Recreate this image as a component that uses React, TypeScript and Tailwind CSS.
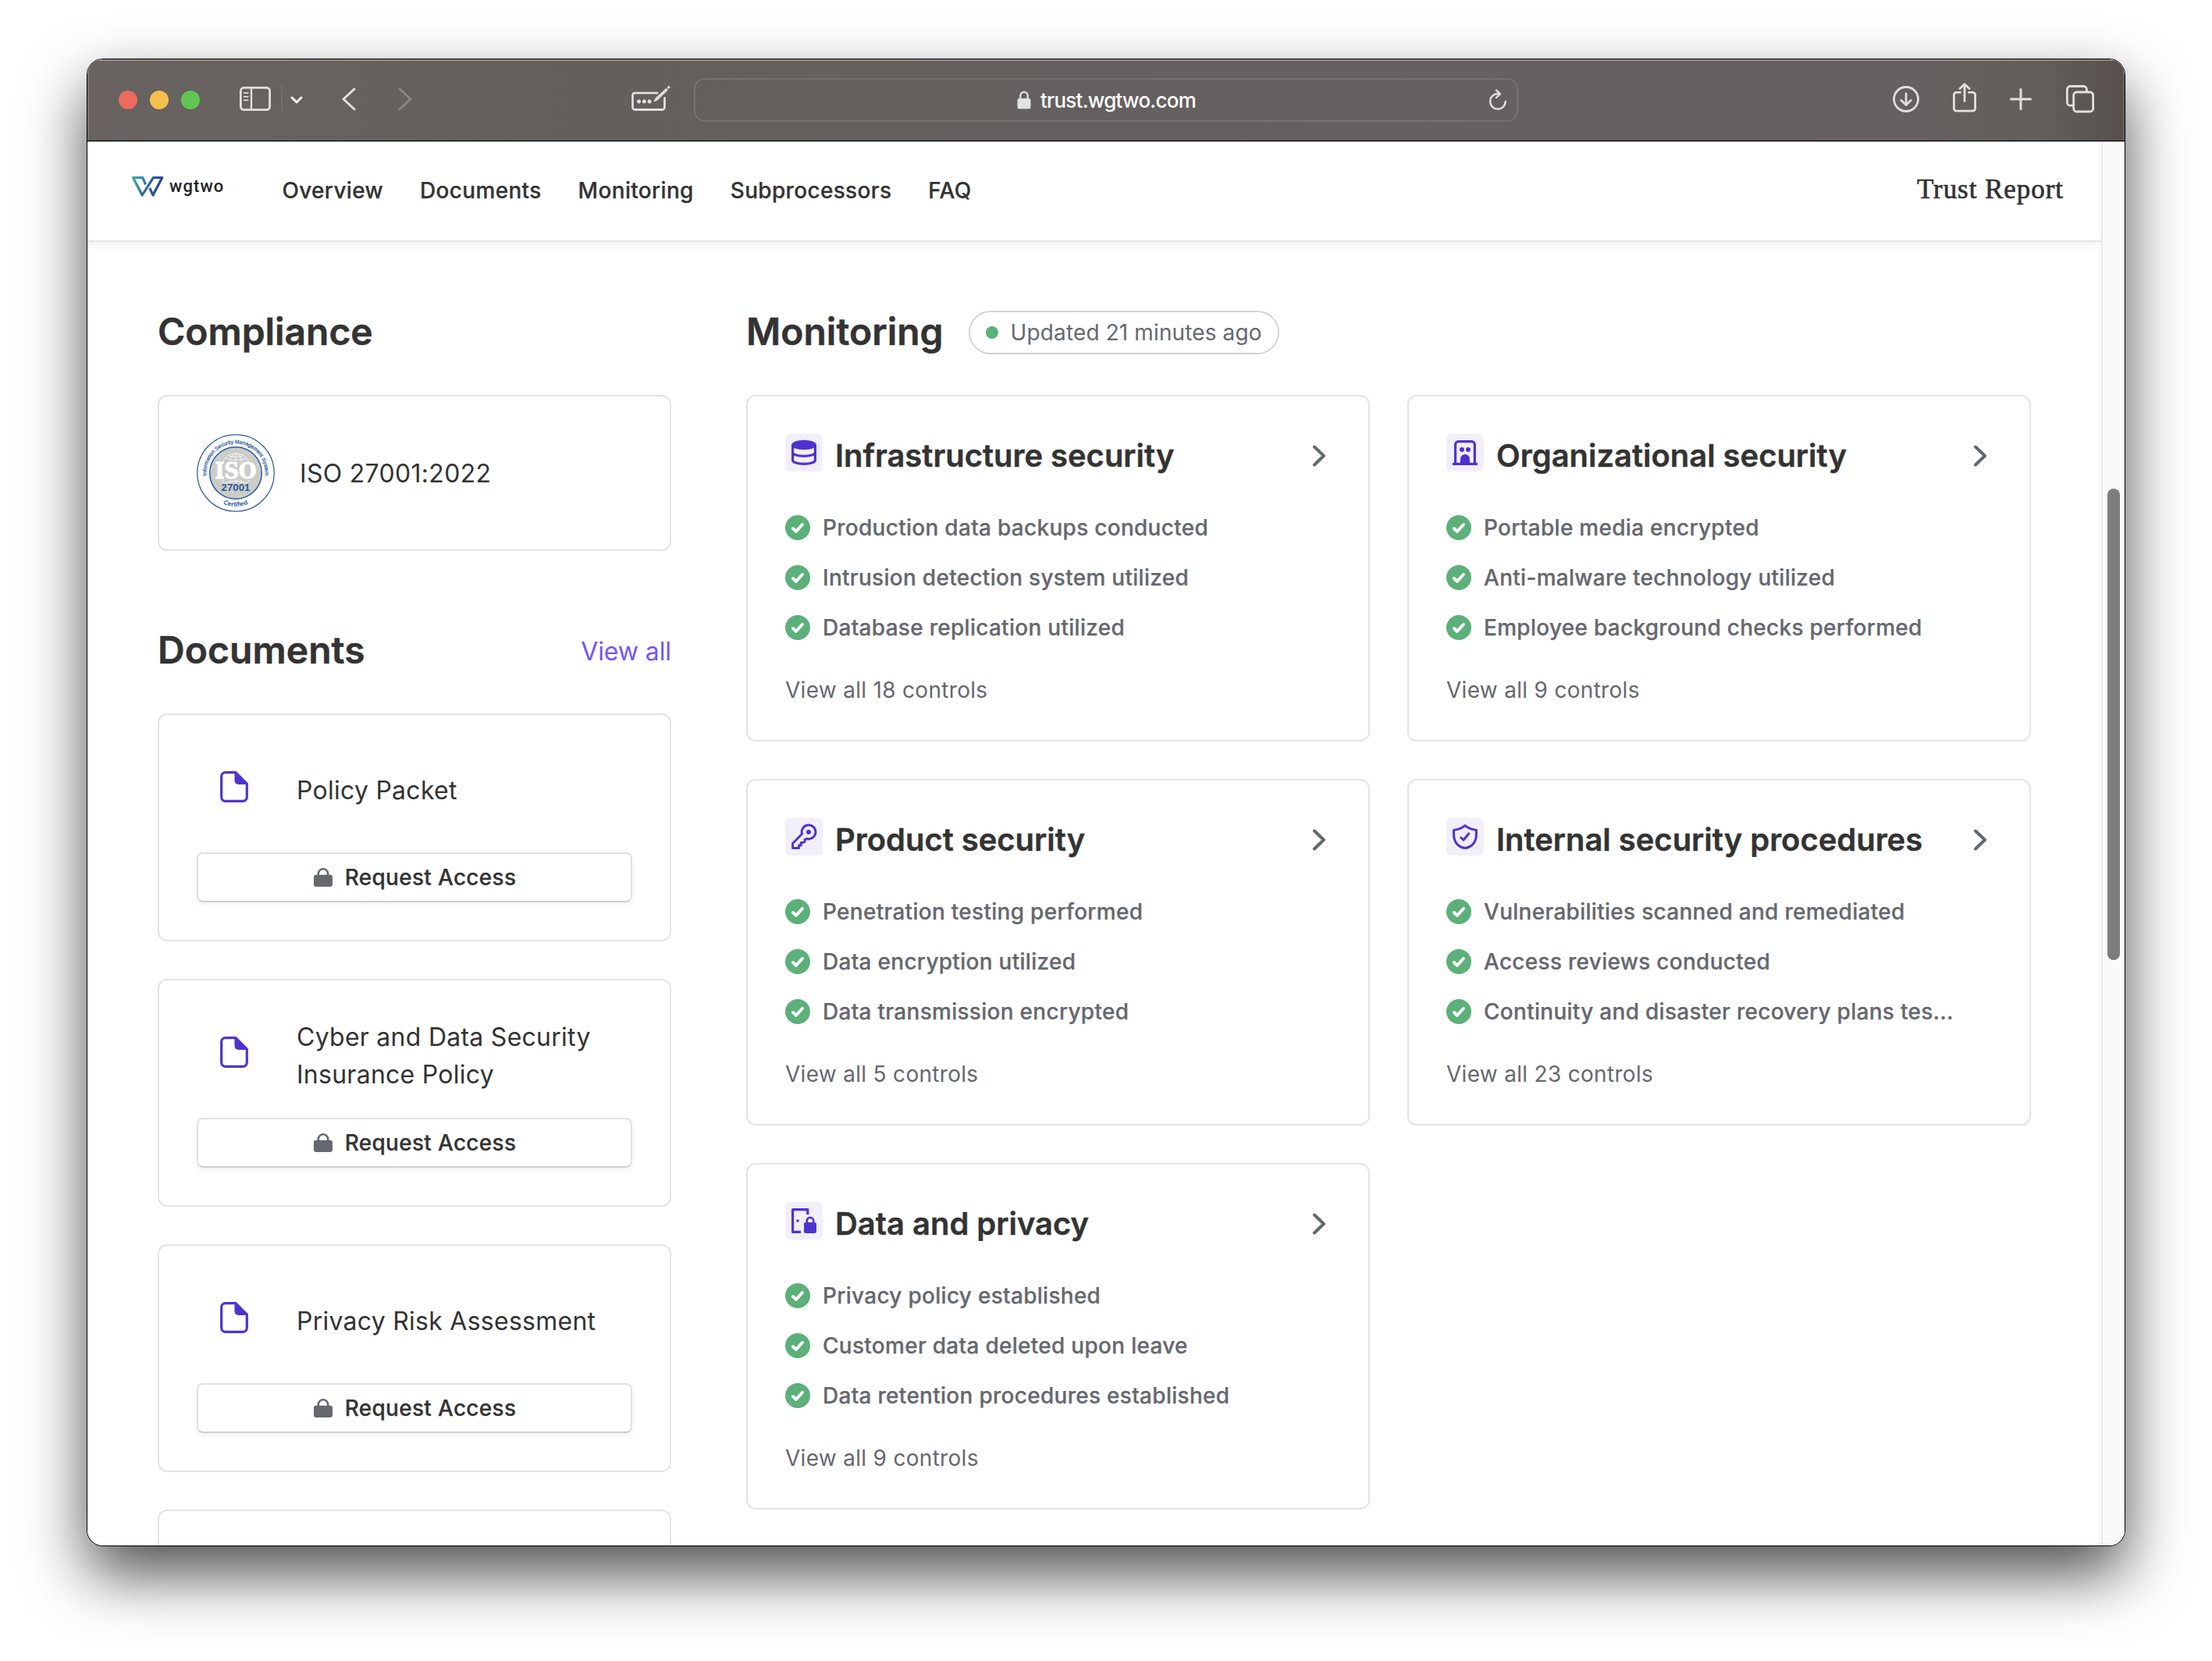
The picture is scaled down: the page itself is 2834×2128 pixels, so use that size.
import type { ReactNode } from 'react';

const INK = '#4f33cf';

/* ---------- Browser toolbar icons ---------- */

function SidebarIcon() {
  return (
    <svg width="40" height="32" viewBox="0 0 40 32" fill="none" stroke="#e3dfde" strokeLinecap="round">
      <rect x="1.4" y="1.4" width="37.2" height="28.2" rx="4" strokeWidth="2.8" />
      <path d="M15 1.5V29.5" strokeWidth="2.4" />
      <path d="M5.8 8.2H10.6M5.8 12.8H10.6M5.8 17.4H10.6" strokeWidth="1.8" />
    </svg>
  );
}

function AutofillIcon() {
  return (
    <svg width="50" height="34" viewBox="0 0 50 34" fill="none" stroke="#e3dfde" strokeLinecap="round" strokeLinejoin="round">
      <path d="M33 10.2H4.5a3 3 0 0 0-3 3V28.5a3 3 0 0 0 3 3H39.5a3 3 0 0 0 3-3V16.5" strokeWidth="2.8" />
      <circle cx="9.5" cy="21" r="2.5" fill="#e3dfde" stroke="none" />
      <circle cx="16.3" cy="21" r="2.5" fill="#e3dfde" stroke="none" />
      <circle cx="23.1" cy="21" r="2.5" fill="#e3dfde" stroke="none" />
      <path d="M29.2 20.8L31.4 16.8L44.5 4.7L46 6.2L33 19Z" fill="#e3dfde" strokeWidth="1.2" />
      <path d="M47.3 3.2L48 2.5" strokeWidth="3" />
    </svg>
  );
}

function DownloadIcon() {
  return (
    <svg width="34" height="34" viewBox="0 0 34 34" fill="none" stroke="#e3dfde" strokeWidth="2.8" strokeLinecap="round" strokeLinejoin="round">
      <circle cx="17" cy="17" r="15.5" />
      <path d="M17 9.8V24M10.8 18.4L17 24.4L23.2 18.4" />
    </svg>
  );
}

function ShareIcon() {
  return (
    <svg width="30" height="38" viewBox="0 0 30 38" fill="none" stroke="#e3dfde" strokeWidth="2.8" strokeLinecap="round" strokeLinejoin="round">
      <path d="M9.5 12.4H4.6a3.2 3.2 0 0 0-3.2 3.2V33a3.2 3.2 0 0 0 3.2 3.2H25.4A3.2 3.2 0 0 0 28.6 33V15.6a3.2 3.2 0 0 0-3.2-3.2H20.5" />
      <path d="M15 23.5V2M9 7.6L15 1.8L21 7.6" />
    </svg>
  );
}

function PlusIcon() {
  return (
    <svg width="28" height="28" viewBox="0 0 28 28" fill="none" stroke="#e3dfde" strokeWidth="3" strokeLinecap="round">
      <path d="M14 1.5V26.5M1.5 14H26.5" />
    </svg>
  );
}

function TabsIcon() {
  return (
    <svg width="36" height="36" viewBox="0 0 36 36" fill="none" stroke="#e3dfde" strokeWidth="2.8" strokeLinejoin="round">
      <rect x="9.7" y="9" width="25" height="25" rx="4" />
      <path d="M9.7 26.2H5.4a4 4 0 0 1-4-4V5.5a4 4 0 0 1 4-4H22.5a4 4 0 0 1 4 4V9" />
    </svg>
  );
}

function Toolbar() {
  return (
    <div className="flex h-[106px] shrink-0 flex-col">
      <div className="flex h-[104px] items-center bg-[linear-gradient(90deg,#686261_0%,#655f5c_25%,#655f5f_50%,#666060_90%,#635e59_96%,#57504d_100%)] pb-0.5 shadow-[inset_0_2px_0_rgba(175,178,160,0.55),inset_2px_0_0_rgba(255,255,255,0.1),inset_-2px_0_0_rgba(255,255,255,0.1)]">
        <div className="ml-10 flex gap-4 pt-0.5">
          <span className="size-6 rounded-full bg-[#ed6a5e]" />
          <span className="size-6 rounded-full bg-[#f5bf4f]" />
          <span className="size-6 rounded-full bg-[#61c554]" />
        </div>
        <div className="ml-[51px] flex items-center">
          <SidebarIcon />
          <span className="ml-[13px] h-9 w-0.5 bg-[#736d6b]" />
          <svg className="ml-[10px] mt-0.5" width="16" height="10" viewBox="0 0 16 10" fill="none" stroke="#f3f0ef" strokeWidth="3" strokeLinecap="round" strokeLinejoin="round">
            <path d="M2 2L8 8L14 2" />
          </svg>
        </div>
        <div className="ml-[50px] flex items-center gap-[54px]">
          <svg width="18" height="30" viewBox="0 0 18 30" fill="none" stroke="#e3dfde" strokeWidth="3" strokeLinecap="round" strokeLinejoin="round">
            <path d="M16 2L2 15L16 28" />
          </svg>
          <svg width="18" height="30" viewBox="0 0 18 30" fill="none" stroke="#8b8583" strokeWidth="3" strokeLinecap="round" strokeLinejoin="round">
            <path d="M2 2L16 15L2 28" />
          </svg>
        </div>
        <div className="ml-[281px] -mt-0.5">
          <AutofillIcon />
        </div>
        <div className="ml-[30px] mt-0.5 flex h-14 w-[1056px] items-center rounded-[14px] border-2 border-[#777170] pr-3">
          <svg className="ml-[412px]" width="18" height="24" viewBox="0 0 18 24" fill="none">
            <rect x="0.5" y="10" width="17" height="13.5" rx="2.5" fill="#e6e2e1" />
            <path d="M4.3 11V6.5a4.7 4.7 0 0 1 9.4 0V11" stroke="#e6e2e1" strokeWidth="2.2" />
          </svg>
          <span className="ml-3 flex-1 pt-0.5 text-[26px] leading-8 font-medium tracking-[-0.75px] text-white">trust.wgtwo.com</span>
          <svg width="24" height="28" viewBox="0 0 24 28" fill="none" stroke="#e3dfde" strokeWidth="2.4" strokeLinecap="round" strokeLinejoin="round">
            <path d="M13.5 6.2A9.8 9.8 0 1 0 21.8 16" />
            <path d="M10 1.5L15 6.3L10 11.2" />
          </svg>
        </div>
        <div className="ml-auto mr-[39px] flex items-center">
          <DownloadIcon />
          <span className="ml-[43px] -mt-1"><ShareIcon /></span>
          <span className="ml-[43px]"><PlusIcon /></span>
          <span className="ml-11"><TabsIcon /></span>
        </div>
      </div>
      <div className="h-px bg-black" />
      <div className="h-px bg-[#b4b4b4]" />
    </div>
  );
}

/* ---------- Site header ---------- */

function Logo() {
  return (
    <div className="flex items-center">
      <svg width="42" height="28" viewBox="0 0 42 28" fill="none" strokeWidth="3.2" strokeLinejoin="round">
        <defs>
          <linearGradient id="mark" gradientUnits="userSpaceOnUse" x1="2" y1="4" x2="40" y2="20">
            <stop offset="0" stopColor="#45a5a6" />
            <stop offset="0.55" stopColor="#2f62a3" />
            <stop offset="1" stopColor="#2a3792" />
          </linearGradient>
        </defs>
        <path d="M18.6 11.5L14.8 2.6H2.4L14.2 25L28.4 2.6H39.8L28 25L23.8 16" stroke="url(#mark)" />
      </svg>
      <span className="ml-[7px] font-[Roboto,sans-serif] text-[22px] leading-7 font-medium tracking-[1.1px] text-[#222]">wgtwo</span>
    </div>
  );
}

function SiteHeader() {
  return (
    <header className="relative z-10 flex h-32 shrink-0 items-center border-b-2 border-[#e4e4e4] bg-white pr-12 pl-14 shadow-[0_4px_16px_rgba(0,0,0,0.06)]">
      <div className="-mt-3">
        <Logo />
      </div>
      <nav className="ml-[74px] flex gap-[47px] pb-0.5 text-[28px] leading-10 font-medium tracking-[0.32px] text-[#333] [-webkit-text-stroke:0.25px_#333]">
        <a>Overview</a>
        <a>Documents</a>
        <a>Monitoring</a>
        <a>Subprocessors</a>
        <a>FAQ</a>
      </nav>
      <span className="ml-auto pb-1 font-['Liberation_Serif',serif] text-[35px] leading-10 tracking-[0.95px] text-[#333] [-webkit-text-stroke:0.7px_#333]">Trust Report</span>
    </header>
  );
}

/* ---------- Compliance and documents ---------- */

function IsoBadge() {
  return (
    <svg width="100" height="100" viewBox="0 0 100 100" fill="none">
      <defs>
        <path id="arcTop" d="M13.3 58A37.6 37.6 0 1 1 86.7 58" />
        <path id="arcBottom" d="M7.2 50A42.8 42.8 0 0 0 92.8 50" />
      </defs>
      <circle cx="50" cy="50" r="49.2" fill="#fff" stroke="#2a5a9c" strokeWidth="1.2" />
      <circle cx="50" cy="50" r="33.3" fill="#cccdc8" stroke="#2a5a9c" strokeWidth="1.5" />
      <g stroke="#f4f4f2" strokeWidth="1">
        <path d="M33 36C37 28 43 25 50 25S63 28 67 36" />
        <path d="M42 36C43 30 46 25 50 25S57 30 58 36M50 25V36M36 31Q50 36 64 31M40 27.5Q50 31 60 27.5" />
        <path d="M33 59C35 64 39 67 42 68M67 59C65 64 61 67 58 68M42 59L44 64M58 59L56 64M50 59V64M36 63Q50 58 64 63" />
      </g>
      <text x="50" y="57" textAnchor="middle" textLength="53" lengthAdjust="spacingAndGlyphs" fontFamily="DejaVu Serif, serif" fontWeight="700" fontSize="27" fill="#fff" stroke="#fff" strokeWidth="1">ISO</text>
      <text x="50" y="73" textAnchor="middle" textLength="37" lengthAdjust="spacingAndGlyphs" fontFamily="Liberation Sans, sans-serif" fontWeight="700" fontSize="13.5" fill="#2a5a9c">27001</text>
      <text fontFamily="Liberation Sans, sans-serif" fontSize="6.7" fill="#2a5a9c" stroke="#2a5a9c" strokeWidth="0.25">
        <textPath href="#arcTop" startOffset="50%" textAnchor="middle">Information Security Management System</textPath>
      </text>
      <text fontFamily="Liberation Sans, sans-serif" fontSize="8" fontWeight="700" fill="#2a5a9c">
        <textPath href="#arcBottom" startOffset="50%" textAnchor="middle">Certified</textPath>
      </text>
    </svg>
  );
}

function DocumentIcon() {
  return (
    <svg width="36" height="40" viewBox="0 0 36 40" fill="none">
      <path d="M19.5 1.7H6.7a5 5 0 0 0-5 5V33.3a5 5 0 0 0 5 5H29.3a5 5 0 0 0 5-5V16" stroke={INK} strokeWidth="3.2" />
      <path d="M18.5 0H20.5L36 15.5V17H23.5a5 5 0 0 1-5-5Z" fill={INK} />
    </svg>
  );
}

function DocumentCard({ title }: { title: string }) {
  return (
    <div className="flex h-[292px] shrink-0 flex-col rounded-xl border-2 border-[#e4e4e4] bg-white p-12">
      <div className="flex h-24 items-center">
        <div className="mb-2 ml-[30px]">
          <DocumentIcon />
        </div>
        <div className="ml-[62px] w-[400px] pt-0.5 text-[32px] leading-[48px] tracking-[0.26px] text-[#333]">{title}</div>
      </div>
      <button className="mt-8 flex h-16 items-center justify-center gap-4 rounded-lg border-2 border-[#e1e1e1] border-b-[#cfcfcf] bg-white pl-px text-[28px] leading-10 font-medium tracking-[0.3px] text-[#333] shadow-[0_3px_6px_rgba(0,0,0,0.06)] [-webkit-text-stroke:0.25px_#333]">
        <svg width="24" height="24" viewBox="0 0 24 24" fill="none">
          <rect x="0" y="8.8" width="24" height="15.2" rx="3" fill="#65686e" />
          <path d="M5.8 10V7.5a6.2 6.2 0 0 1 12.4 0V10" stroke="#65686e" strokeWidth="2.6" />
        </svg>
        <span>Request Access</span>
      </button>
    </div>
  );
}

/* ---------- Monitoring ---------- */

const icons: Record<string, ReactNode> = {
  database: (
    <>
      <ellipse cx="24" cy="14" rx="16" ry="6.2" fill={INK} />
      <path d="M9.6 14V33.5C9.6 36.5 16 38.4 24 38.4S38.4 36.5 38.4 33.5V14M9.6 23.5C9.6 26.5 16 28.4 24 28.4S38.4 26.5 38.4 23.5" stroke={INK} strokeWidth="3.2" />
    </>
  ),
  building: (
    <>
      <path d="M11.6 38V13.6a4 4 0 0 1 4-4H32.4a4 4 0 0 1 4 4V38" stroke={INK} strokeWidth="3.2" />
      <path d="M8 38.4H40" stroke={INK} strokeWidth="3.2" />
      <circle cx="20" cy="20" r="3" fill={INK} />
      <circle cx="28" cy="20" r="3" fill={INK} />
      <path d="M18 39V32a6 6 0 0 1 12 0V39Z" fill={INK} />
    </>
  ),
  key: (
    <>
      <path d="M21.5 20.5A8.9 8.9 0 1 1 27.5 26.5L25 27.8V30.5L23 31.5H20.3V35H17.5V38.4H9.6V32.5Z" stroke={INK} strokeWidth="3" strokeLinejoin="round" />
      <circle cx="30" cy="18" r="3" fill={INK} />
    </>
  ),
  shield: (
    <g stroke={INK} strokeWidth="3" strokeLinejoin="round">
      <path d="M24 9.7C27.5 12.8 32 14.6 38.4 15.5V21C38.4 30 33.5 37.5 24 38.5C14.5 37.5 9.6 30 9.6 21V15.5C16 14.6 20.5 12.8 24 9.7Z" />
      <path d="M18.8 25L22 28.2L28.8 20" strokeLinecap="round" />
    </g>
  ),
  privacy: (
    <>
      <path d="M28.8 16V9.6H9.6V38.4H20" stroke={INK} strokeWidth="3.2" strokeLinejoin="round" />
      <circle cx="16" cy="24" r="1.8" fill={INK} />
      <rect x="24" y="26" width="16" height="14" rx="2.5" fill={INK} />
      <path d="M27.7 27V24.2a4.3 4.3 0 0 1 8.6 0V27" stroke={INK} strokeWidth="2.6" />
    </>
  ),
};

function CheckBadge() {
  return (
    <svg width="32" height="32" viewBox="0 0 32 32" fill="none" className="shrink-0">
      <circle cx="16" cy="16" r="16" fill="#5cb07a" />
      <path d="M10 17L13.8 20.8L22 12" stroke="#fff" strokeWidth="4" strokeLinecap="round" strokeLinejoin="round" />
    </svg>
  );
}

type Section = { icon: string; title: string; items: string[]; total: number };

const sections: Section[] = [
  { icon: 'database', title: 'Infrastructure security', items: ['Production data backups conducted', 'Intrusion detection system utilized', 'Database replication utilized'], total: 18 },
  { icon: 'building', title: 'Organizational security', items: ['Portable media encrypted', 'Anti-malware technology utilized', 'Employee background checks performed'], total: 9 },
  { icon: 'key', title: 'Product security', items: ['Penetration testing performed', 'Data encryption utilized', 'Data transmission encrypted'], total: 5 },
  { icon: 'shield', title: 'Internal security procedures', items: ['Vulnerabilities scanned and remediated', 'Access reviews conducted', 'Continuity and disaster recovery plans tes...'], total: 23 },
  { icon: 'privacy', title: 'Data and privacy', items: ['Privacy policy established', 'Customer data deleted upon leave', 'Data retention procedures established'], total: 9 },
];

function MonitoringCard({ icon, title, items, total }: Section) {
  return (
    <div className="flex h-[444px] flex-col rounded-xl border-2 border-[#e4e4e4] bg-white px-12 pt-12">
      <div className="flex h-14 items-start">
        <span className="flex size-12 shrink-0 rounded-md bg-[#f1effa]">
          <svg width="48" height="48" viewBox="0 0 48 48" fill="none">{icons[icon]}</svg>
        </span>
        <h3 className="ml-4 pt-0.5 text-[40px] leading-[52px] font-semibold tracking-[-0.04px] whitespace-nowrap text-[#333] [-webkit-text-stroke:0.4px_#333]">{title}</h3>
        <svg className="mt-[14px] mr-[6px] ml-auto" width="18" height="28" viewBox="0 0 18 28" fill="none" stroke="#65686e" strokeWidth="4" strokeLinecap="round" strokeLinejoin="round">
          <path d="M3 2.5L15 14L3 25.5" />
        </svg>
      </div>
      <ul className="mt-11 flex flex-col gap-6 text-[28px] font-medium tracking-[0.28px] text-[#65686e] [-webkit-text-stroke:0.25px_#65686e]">
        {items.map((item) => (
          <li key={item} className="flex h-10 items-center gap-4 leading-10 whitespace-nowrap">
            <CheckBadge />
            {item}
          </li>
        ))}
      </ul>
      <a className="mt-10 text-[28px] leading-10 tracking-[0.3px] text-[#65686e]">View all {total} controls</a>
    </div>
  );
}

export default function App() {
  return (
    <div className="h-[2128px] w-[2834px] overflow-hidden bg-white pt-[76px] pl-[112px] font-[Inter,sans-serif]">
      <div className="h-[1904px] w-[2610px] rounded-[20px] shadow-[0_0_0_1px_#000,0_36px_80px_rgba(0,0,0,0.7)]">
        <div className="flex h-full flex-col overflow-hidden rounded-[20px] bg-white">
          <Toolbar />
          <div className="flex min-h-0 flex-1">
            <div className="flex w-[2580px] flex-col overflow-hidden">
              <SiteHeader />
              <main className="flex min-h-0 flex-1 gap-24 px-[90px] pt-[88px]">
                <section className="w-[658px] shrink-0">
                  <h2 className="h-[52px] text-[48px] leading-[54px] font-semibold tracking-[-0.05px] text-[#333] [-webkit-text-stroke:0.5px_#333]">Compliance</h2>
                  <div className="mt-14 flex h-[200px] items-center rounded-xl border-2 border-[#e4e4e4] px-12">
                    <IsoBadge />
                    <span className="ml-8 pt-0.5 text-[32px] leading-[48px] tracking-[0.3px] text-[#333]">ISO 27001:2022</span>
                  </div>
                  <div className="mt-[100px] flex h-[54px] items-center justify-between">
                    <h2 className="text-[48px] leading-[52px] font-semibold tracking-[0.05px] text-[#333] [-webkit-text-stroke:0.5px_#333]">Documents</h2>
                    <a className="pt-1 text-[32px] leading-[48px] tracking-[-0.1px] text-[#7257f5]">View all</a>
                  </div>
                  <div className="mt-[54px] flex flex-col gap-12">
                    <DocumentCard title="Policy Packet" />
                    <DocumentCard title="Cyber and Data Security Insurance Policy" />
                    <DocumentCard title="Privacy Risk Assessment" />
                    <div className="h-[292px] rounded-xl border-2 border-[#e4e4e4]" />
                  </div>
                </section>
                <section className="w-[1646px] shrink-0">
                  <div className="flex h-14 items-start">
                    <h2 className="text-[48px] leading-[54px] font-semibold text-[#333] [-webkit-text-stroke:0.5px_#333]">Monitoring</h2>
                    <div className="ml-8 flex h-14 items-center rounded-full border-2 border-[#d4d4d4] px-5">
                      <span className="size-4 rounded-full bg-[#5cb07a]" />
                      <span className="ml-4 text-[28px] leading-10 tracking-[0.12px] text-[#65686e]">Updated 21 minutes ago</span>
                    </div>
                  </div>
                  <div className="mt-[52px] grid grid-cols-2 gap-12">
                    {sections.map((s) => (
                      <MonitoringCard key={s.title} {...s} />
                    ))}
                  </div>
                </section>
              </main>
            </div>
            <div className="flex w-[30px] shrink-0 justify-center border-l-2 border-[#e8e8e8] bg-[#fafafa] pt-[444px]">
              <span className="h-[604px] w-4 rounded-full bg-[#7d7d7d]" />
            </div>
          </div>
        </div>
      </div>
    </div>
  );
}
